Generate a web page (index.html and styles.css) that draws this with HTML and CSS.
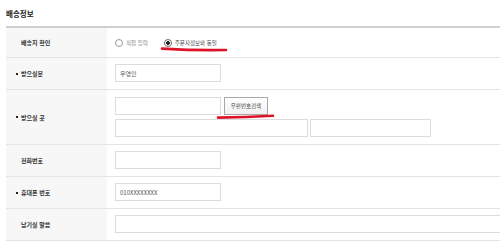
FILE: index.html
```html
<!DOCTYPE html>
<html lang="ko">
<head>
  <meta charset="UTF-8" />
  <meta name="viewport" content="width=device-width, initial-scale=1.0">
  <title>배송정보</title>
  <link rel="stylesheet" href="styles.css">
</head>
<body>
  <h2 class="title">배송정보</h2>

  <div class="form-table">
    <div class="row">
      <div class="label">배송지 확인</div>
      <div class="value radios">
        <label class="radio"><input type="radio" name="ship"> 직접 입력</label>
        <label class="radio dark"><input type="radio" name="ship" checked> 주문자정보와 동일</label>
      </div>
    </div>

    <div class="row">
      <div class="label req">받으실분</div>
      <div class="value">
        <input class="field w-short" type="text" value="우영인">
      </div>
    </div>

    <div class="row">
      <div class="label req">받으실 곳</div>
      <div class="value stack">
        <div class="line">
          <input class="field w-short" type="text">
          <button class="btn">우편번호검색</button>
        </div>
        <div class="line">
          <input class="field w-addr" type="text">
          <input class="field w-detail" type="text">
        </div>
      </div>
    </div>

    <div class="row">
      <div class="label">전화번호</div>
      <div class="value">
        <input class="field w-short" type="text">
      </div>
    </div>

    <div class="row">
      <div class="label req">휴대폰 번호</div>
      <div class="value">
        <input class="field w-short" type="text" value="010XXXXXXXX">
      </div>
    </div>

    <div class="row">
      <div class="label">남기실 말씀</div>
      <div class="value">
        <input class="field w-long" type="text">
      </div>
    </div>
  </div>

  <!-- red marker strokes drawn over the form -->
  <svg class="marks" width="500" height="250" viewBox="0 0 500 250">
    <path d="M162 48.6 Q195 50.6 226 50" />
    <path d="M218 117.6 Q246 117.2 273 115.8" />
  </svg>
</body>
</html>
```

FILE: styles.css
```css
html, body {
  overflow: hidden;
}
body {
  margin: 0;
  padding: 0 0 0 6px;
  position: relative;
  background: #fff;
  color: #333;
  font-family: "Noto Sans CJK KR", "Noto Sans", sans-serif;
}
.title {
  margin: 0;
  height: 26px;
  display: flex;
  align-items: center;
  font-size: 7.5px;
  font-weight: bold;
  color: #222;
}
.form-table {
  width: 494px;
  border-top: 2px solid #cfcfcf;
}
.row {
  display: flex;
  border-bottom: 1px solid #e4e4e4;
}
.label {
  box-sizing: border-box;
  width: 101px;
  flex: none;
  padding-left: 15px;
  background: #f7f7f7;
  display: flex;
  align-items: center;
  font-size: 6px;
  font-weight: bold;
  color: #333;
}
.label.req {
  padding-left: 10px;
}
.label.req::before {
  content: "";
  width: 2px;
  height: 2px;
  background: #222;
  margin-right: 3px;
}
.value {
  padding: 6px 0 7px 8px;
  display: flex;
  align-items: center;
}
.radios {
  height: 29px;
  padding: 0 0 0 8px;
  gap: 16px;
}
.radio {
  display: flex;
  align-items: center;
  gap: 3px;
  font-size: 5.5px;
  color: #888;
}
.radio.dark {
  color: #444;
}
.radio input {
  appearance: none;
  margin: 0;
  width: 8px;
  height: 8px;
  border: 1px solid #9a9a9a;
  border-radius: 50%;
  background: #fff;
}
.radio input:checked {
  background: radial-gradient(circle, #222 0 1.6px, #fff 2.1px);
  border-color: #666;
}
.stack {
  flex-direction: column;
  align-items: flex-start;
  gap: 4px;
  padding-top: 7px;
}
.line {
  display: flex;
  gap: 2px;
}
.field {
  box-sizing: border-box;
  height: 18px;
  margin: 0;
  padding: 0 4px;
  border: 1px solid #dcdcdc;
  background: #fff;
  font-family: "Noto Sans CJK KR", "Noto Sans", sans-serif;
  font-size: 6px;
  color: #555;
  outline: none;
}
.w-short { width: 106px; }
.w-addr { width: 193px; }
.w-detail { width: 121px; }
.w-long {
  width: 385px;
  border-right: 0;
}
.btn {
  box-sizing: border-box;
  height: 18px;
  width: 44px;
  margin: 0 0 0 1px;
  padding: 0;
  border: 1px solid #a8a8a8;
  background: linear-gradient(#fff, #f1f1f1);
  font-family: "Noto Sans CJK KR", "Noto Sans", sans-serif;
  font-size: 5.5px;
  color: #444;
}
.marks {
  position: absolute;
  left: 0;
  top: 0;
  pointer-events: none;
}
.marks path {
  fill: none;
  stroke: #dc1428;
  stroke-width: 2.6;
  stroke-linecap: round;
}
```
